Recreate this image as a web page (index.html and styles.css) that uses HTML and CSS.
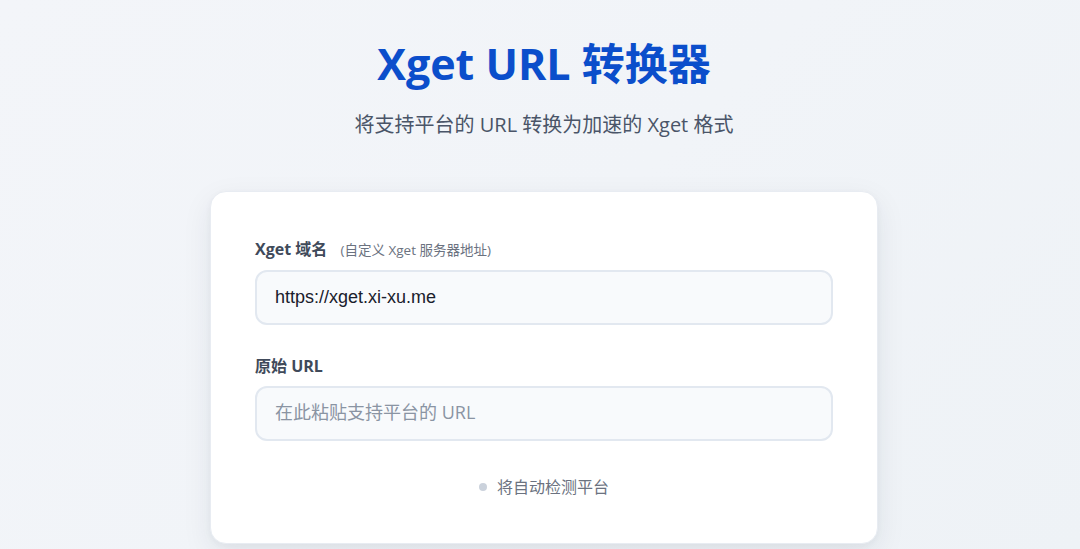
FILE: index.html
```html
<!DOCTYPE html>
<html lang="zh-CN">
<head>
<meta charset="utf-8">
<title>Xget URL 转换器</title>
<link rel="stylesheet" href="styles.css">
</head>
<body>
<main class="page">
  <header class="hero">
    <h1 class="title">Xget URL 转换器</h1>
    <p class="subtitle">将支持平台的 URL 转换为加速的 Xget 格式</p>
  </header>
  <section class="card">
    <div class="field">
      <label class="label" for="domain">Xget 域名 <span class="hint">(自定义 Xget 服务器地址)</span></label>
      <input id="domain" class="input" type="text" value="https://xget.xi-xu.me">
    </div>
    <div class="field">
      <label class="label" for="url">原始 URL</label>
      <input id="url" class="input" type="text" placeholder="在此粘贴支持平台的 URL">
    </div>
    <div class="status"><span class="dot"></span><span class="status-text">将自动检测平台</span></div>
  </section>
</main>
</body>
</html>
```

FILE: styles.css
```css
html, body {
  margin: 0;
  padding: 0;
  height: 100%;
}
body {
  background: linear-gradient(135deg, #f3f5f9 0%, #f1f4f8 50%, #eef2f6 100%);
  font-family: "Open Sans", "Noto Sans CJK SC", sans-serif;
  color: #2d3748;
  overflow: hidden;
}
.page {
  display: flex;
  flex-direction: column;
  align-items: center;
  padding-top: 30px;
  padding-left: 8px;
}
.hero {
  text-align: center;
}
.title {
  margin: 0;
  font-family: "Open Sans", "Noto Sans CJK SC", sans-serif;
  font-size: 43px;
  font-weight: 700;
  line-height: 68px;
  color: #0b4ecb;
}
.subtitle {
  margin: 12px 0 0;
  font-size: 20px;
  line-height: 30px;
  color: #4a5568;
}
.card {
  box-sizing: border-box;
  margin-top: 51px;
  width: 668px;
  height: 353px;
  background: #ffffff;
  border: 1px solid #e8ecf2;
  border-radius: 16px;
  box-shadow: 0 10px 30px rgba(30, 41, 59, 0.08), 0 2px 6px rgba(30, 41, 59, 0.04);
  padding: 44px 44px 0;
  display: flex;
  flex-direction: column;
}
.field {
  display: flex;
  flex-direction: column;
  gap: 7px;
  margin-bottom: 28px;
}
.field + .field {
  margin-bottom: 29px;
}
.label {
  font-size: 16px;
  font-weight: 700;
  line-height: 26px;
  color: #404a5a;
}
.hint {
  margin-left: 9px;
  font-size: 13.5px;
  font-weight: 400;
  color: #6b7280;
}
.input {
  box-sizing: border-box;
  width: 100%;
  height: 55px;
  padding: 0 18px;
  background: #f8fafc;
  border: 2px solid #e2e8f0;
  border-radius: 12px;
  font-family: "Liberation Sans", "Noto Sans CJK SC", sans-serif;
  font-size: 18px;
  color: #1a202c;
  outline: none;
}
.input::placeholder {
  font-family: "Open Sans", "Noto Sans CJK SC", sans-serif;
  color: #8a94a3;
}
.status {
  display: flex;
  justify-content: center;
  align-items: center;
  gap: 10px;
  margin-top: 5px;
  font-size: 16px;
  line-height: 24px;
  color: #6b7280;
}
.dot {
  width: 8px;
  height: 8px;
  border-radius: 50%;
  background: #cbd2dc;
}
```
